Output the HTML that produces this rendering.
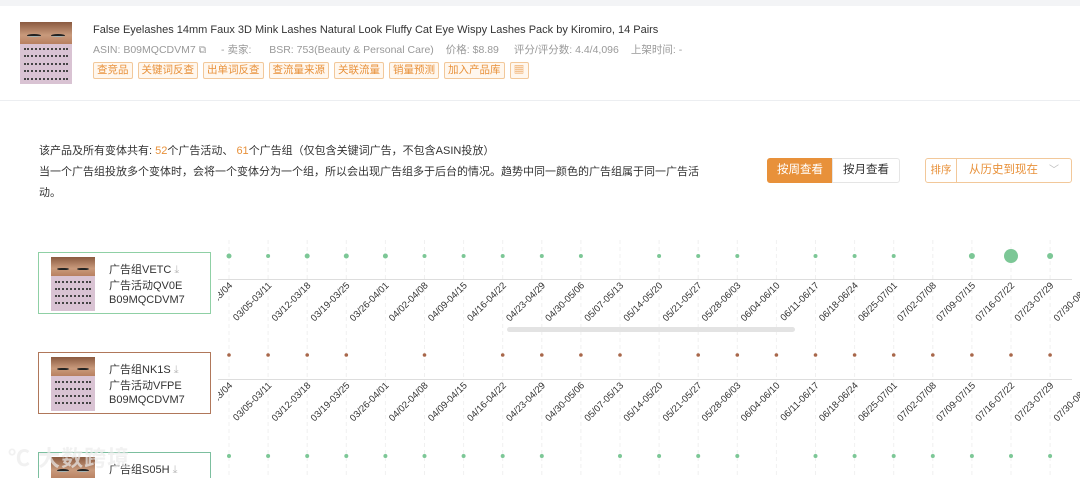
<!DOCTYPE html>
<html><head><meta charset="utf-8"><style>
*{margin:0;padding:0;box-sizing:border-box}
html,body{width:1080px;height:478px;overflow:hidden}
body{background:#fff;font-family:"Liberation Sans","Noto Sans CJK SC",sans-serif;position:relative;color:#333}
.abs{position:absolute}
.top{left:0;top:0;width:1080px;height:6px;background:#f3f4f6}
.sep{left:0;top:100px;width:1080px;height:1px;background:#eceef1}
.pimg{overflow:hidden;background:#d9c3d3}
.pimg .face{position:absolute;left:0;top:0;width:100%;height:36%;background:linear-gradient(#8a5a40,#c99a7c 60%,#b88060)}
.pimg .eye{position:absolute;top:55%;width:26%;height:14%;background:#9fb3b6;border-radius:50%;border-top:2px solid #222}
.pimg .lash{position:absolute;left:8%;width:84%;height:3px;border-top:2px dotted #444}
.title{left:93px;top:24px;font-size:11px;color:#333}
.meta{left:93px;top:42px;font-size:10.5px;color:#999;white-space:nowrap}
.meta span{margin-right:12px}
.tags{left:93px;top:62px;display:flex;gap:5px}
.tag{border:1px solid #f2c89a;background:#fff7ee;color:#e8913a;font-size:10.5px;height:17px;line-height:15px;padding:0 3px;border-radius:2px}
.txt{left:39px;font-size:11px;color:#333}
.or{color:#e8913a}
.btn{top:158px;height:25px;line-height:23px;font-size:11.5px;text-align:center;border:1px solid #e5e5e5}
.card{left:38px;width:173px;height:62px;border:1px solid #8fd0a5;background:#fff;overflow:hidden}
.card .pimg{position:absolute;left:12px;top:4px;width:44px;height:54px}
.card .l{position:absolute;left:70px;font-size:11px;color:#333;white-space:nowrap}
</style></head><body>
<div class="abs top"></div>
<div class="abs pimg" style="left:20px;top:22px;width:52px;height:62px">
 <div class="face"><div class="eye" style="left:14%"></div><div class="eye" style="left:60%"></div></div>
 <div class="lash" style="top:42%"></div><div class="lash" style="top:54%"></div><div class="lash" style="top:66%"></div><div class="lash" style="top:78%"></div><div class="lash" style="top:90%"></div>
</div>
<div class="abs title">False Eyelashes 14mm Faux 3D Mink Lashes Natural Look Fluffy Cat Eye Wispy Lashes Pack by Kiromiro, 14 Pairs</div>
<div class="abs meta"><span>ASIN: B09MQCDVM7 ⧉</span><span>&nbsp;- 卖家:</span><span>&nbsp;&nbsp;BSR: 753(Beauty &amp; Personal Care)</span><span>价格: $8.89</span><span>&nbsp;评分/评分数: 4.4/4,096</span><span>上架时间: -</span></div>
<div class="abs tags"><span class="tag">查竞品</span><span class="tag">关键词反查</span><span class="tag">出单词反查</span><span class="tag">查流量来源</span><span class="tag">关联流量</span><span class="tag">销量预测</span><span class="tag">加入产品库</span><span class="tag" style="width:19px;text-align:center">▦</span></div>
<div class="abs sep"></div>
<div class="abs txt" style="top:142px">该产品及所有变体共有: <span class="or">52</span>个广告活动、 <span class="or">61</span>个广告组（仅包含关键词广告，不包含ASIN投放）</div>
<div class="abs txt" style="top:163px">当一个广告组投放多个变体时，会将一个变体分为一个组，所以会出现广告组多于后台的情况。趋势中同一颜色的广告组属于同一广告活</div>
<div class="abs txt" style="top:184px">动。</div>
<div class="abs btn" style="left:767px;width:66px;background:#e8913a;border-color:#e8913a;color:#fff;border-radius:3px 0 0 3px">按周查看</div>
<div class="abs btn" style="left:832px;width:68px;color:#333;border-radius:0 3px 3px 0">按月查看</div>
<div class="abs btn" style="left:925px;width:147px;border-color:#f2c89a;border-radius:3px;text-align:left;color:#e8913a">
 <span style="display:inline-block;width:31px;text-align:center;border-right:1px solid #f2c89a;font-size:10.5px">排序</span><span style="margin-left:12px">从历史到现在</span><span style="position:absolute;right:12px;color:#bbb;font-size:10px">﹀</span></div>

<svg class="abs" style="left:0;top:0" width="1080" height="478" font-family="Liberation Sans, sans-serif" font-size="9.5" fill="#333">
<defs><clipPath id="c"><rect x="218" y="230" width="862" height="248"/></clipPath></defs>
<g clip-path="url(#c)">
<g stroke="#f0f0f0" stroke-dasharray="4 3">
<line x1="229" y1="240" x2="229" y2="478"/><line x1="268.1" y1="240" x2="268.1" y2="478"/><line x1="307.2" y1="240" x2="307.2" y2="478"/><line x1="346.3" y1="240" x2="346.3" y2="478"/><line x1="385.4" y1="240" x2="385.4" y2="478"/><line x1="424.5" y1="240" x2="424.5" y2="478"/><line x1="463.6" y1="240" x2="463.6" y2="478"/><line x1="502.7" y1="240" x2="502.7" y2="478"/><line x1="541.8" y1="240" x2="541.8" y2="478"/><line x1="580.9" y1="240" x2="580.9" y2="478"/><line x1="620" y1="240" x2="620" y2="478"/><line x1="659.1" y1="240" x2="659.1" y2="478"/><line x1="698.2" y1="240" x2="698.2" y2="478"/><line x1="737.3" y1="240" x2="737.3" y2="478"/><line x1="776.4" y1="240" x2="776.4" y2="478"/><line x1="815.5" y1="240" x2="815.5" y2="478"/><line x1="854.6" y1="240" x2="854.6" y2="478"/><line x1="893.7" y1="240" x2="893.7" y2="478"/><line x1="932.8" y1="240" x2="932.8" y2="478"/><line x1="971.9" y1="240" x2="971.9" y2="478"/><line x1="1011" y1="240" x2="1011" y2="478"/><line x1="1050.1" y1="240" x2="1050.1" y2="478"/>
</g>
<line x1="218" y1="279.5" x2="1072" y2="279.5" stroke="#ddd"/>
<line x1="218" y1="379.5" x2="1072" y2="379.5" stroke="#ddd"/>
<rect x="507" y="327" width="288" height="5" rx="2.5" fill="#e3e3e3"/>
<g fill="#7cc796">
<circle cx="229" cy="256" r="2.5"/><circle cx="268.1" cy="256" r="2"/><circle cx="307.2" cy="256" r="2.5"/><circle cx="346.3" cy="256" r="2.5"/><circle cx="385.4" cy="256" r="2.5"/><circle cx="424.5" cy="256" r="2"/><circle cx="463.6" cy="256" r="2"/><circle cx="502.7" cy="256" r="2"/><circle cx="541.8" cy="256" r="2"/><circle cx="580.9" cy="256" r="2"/><circle cx="659.1" cy="256" r="2"/><circle cx="698.2" cy="256" r="2"/><circle cx="737.3" cy="256" r="2"/><circle cx="815.5" cy="256" r="2"/><circle cx="854.6" cy="256" r="2"/><circle cx="893.7" cy="256" r="2"/><circle cx="971.9" cy="256" r="3"/><circle cx="1011" cy="256" r="7"/><circle cx="1050.1" cy="256" r="3"/>
<circle cx="229" cy="456" r="2"/><circle cx="268.1" cy="456" r="2"/><circle cx="307.2" cy="456" r="2"/><circle cx="346.3" cy="456" r="2"/><circle cx="385.4" cy="456" r="2"/><circle cx="424.5" cy="456" r="2"/><circle cx="463.6" cy="456" r="2"/><circle cx="502.7" cy="456" r="2"/><circle cx="541.8" cy="456" r="2"/><circle cx="620" cy="456" r="2"/><circle cx="659.1" cy="456" r="2"/><circle cx="698.2" cy="456" r="2"/><circle cx="737.3" cy="456" r="2"/><circle cx="815.5" cy="456" r="2"/><circle cx="854.6" cy="456" r="2"/><circle cx="893.7" cy="456" r="2"/><circle cx="932.8" cy="456" r="2"/><circle cx="971.9" cy="456" r="2"/><circle cx="1011" cy="456" r="2"/><circle cx="1050.1" cy="456" r="2"/>
</g>
<g fill="#a8674a">
<circle cx="229" cy="355" r="1.8"/><circle cx="268.1" cy="355" r="1.8"/><circle cx="307.2" cy="355" r="1.8"/><circle cx="346.3" cy="355" r="1.8"/><circle cx="424.5" cy="355" r="1.8"/><circle cx="502.7" cy="355" r="1.8"/><circle cx="541.8" cy="355" r="1.8"/><circle cx="580.9" cy="355" r="1.8"/><circle cx="620" cy="355" r="1.8"/><circle cx="698.2" cy="355" r="1.8"/><circle cx="737.3" cy="355" r="1.8"/><circle cx="776.4" cy="355" r="1.8"/><circle cx="815.5" cy="355" r="1.8"/><circle cx="854.6" cy="355" r="1.8"/><circle cx="893.7" cy="355" r="1.8"/><circle cx="932.8" cy="355" r="1.8"/><circle cx="971.9" cy="355" r="1.8"/><circle cx="1011" cy="355" r="1.8"/><circle cx="1050.1" cy="355" r="1.8"/>
</g>
<g text-anchor="end">
<text transform="translate(233,286) rotate(-45)">02/26-03/04</text><text transform="translate(272.1,286) rotate(-45)">03/05-03/11</text><text transform="translate(311.2,286) rotate(-45)">03/12-03/18</text><text transform="translate(350.3,286) rotate(-45)">03/19-03/25</text><text transform="translate(389.4,286) rotate(-45)">03/26-04/01</text><text transform="translate(428.5,286) rotate(-45)">04/02-04/08</text><text transform="translate(467.6,286) rotate(-45)">04/09-04/15</text><text transform="translate(506.7,286) rotate(-45)">04/16-04/22</text><text transform="translate(545.8,286) rotate(-45)">04/23-04/29</text><text transform="translate(584.9,286) rotate(-45)">04/30-05/06</text><text transform="translate(624,286) rotate(-45)">05/07-05/13</text><text transform="translate(663.1,286) rotate(-45)">05/14-05/20</text><text transform="translate(702.2,286) rotate(-45)">05/21-05/27</text><text transform="translate(741.3,286) rotate(-45)">05/28-06/03</text><text transform="translate(780.4,286) rotate(-45)">06/04-06/10</text><text transform="translate(819.5,286) rotate(-45)">06/11-06/17</text><text transform="translate(858.6,286) rotate(-45)">06/18-06/24</text><text transform="translate(897.7,286) rotate(-45)">06/25-07/01</text><text transform="translate(936.8,286) rotate(-45)">07/02-07/08</text><text transform="translate(975.9,286) rotate(-45)">07/09-07/15</text><text transform="translate(1015,286) rotate(-45)">07/16-07/22</text><text transform="translate(1054.1,286) rotate(-45)">07/23-07/29</text><text transform="translate(1093.2,286) rotate(-45)">07/30-08/05</text>
<text transform="translate(233,386) rotate(-45)">02/26-03/04</text><text transform="translate(272.1,386) rotate(-45)">03/05-03/11</text><text transform="translate(311.2,386) rotate(-45)">03/12-03/18</text><text transform="translate(350.3,386) rotate(-45)">03/19-03/25</text><text transform="translate(389.4,386) rotate(-45)">03/26-04/01</text><text transform="translate(428.5,386) rotate(-45)">04/02-04/08</text><text transform="translate(467.6,386) rotate(-45)">04/09-04/15</text><text transform="translate(506.7,386) rotate(-45)">04/16-04/22</text><text transform="translate(545.8,386) rotate(-45)">04/23-04/29</text><text transform="translate(584.9,386) rotate(-45)">04/30-05/06</text><text transform="translate(624,386) rotate(-45)">05/07-05/13</text><text transform="translate(663.1,386) rotate(-45)">05/14-05/20</text><text transform="translate(702.2,386) rotate(-45)">05/21-05/27</text><text transform="translate(741.3,386) rotate(-45)">05/28-06/03</text><text transform="translate(780.4,386) rotate(-45)">06/04-06/10</text><text transform="translate(819.5,386) rotate(-45)">06/11-06/17</text><text transform="translate(858.6,386) rotate(-45)">06/18-06/24</text><text transform="translate(897.7,386) rotate(-45)">06/25-07/01</text><text transform="translate(936.8,386) rotate(-45)">07/02-07/08</text><text transform="translate(975.9,386) rotate(-45)">07/09-07/15</text><text transform="translate(1015,386) rotate(-45)">07/16-07/22</text><text transform="translate(1054.1,386) rotate(-45)">07/23-07/29</text><text transform="translate(1093.2,386) rotate(-45)">07/30-08/05</text>
</g>
</g>
</svg>

<div class="abs card" style="top:252px">
 <div class="pimg"><div class="face"><div class="eye" style="left:14%"></div><div class="eye" style="left:60%"></div></div><div class="lash" style="top:45%"></div><div class="lash" style="top:58%"></div><div class="lash" style="top:71%"></div><div class="lash" style="top:84%"></div></div>
 <div class="l" style="top:8px">广告组VETC <span style="color:#bbb">⤓</span></div><div class="l" style="top:24px">广告活动QV0E</div><div class="l" style="top:41px">B09MQCDVM7</div>
</div>
<div class="abs card" style="top:352px;border-color:#b0775a">
 <div class="pimg"><div class="face"><div class="eye" style="left:14%"></div><div class="eye" style="left:60%"></div></div><div class="lash" style="top:45%"></div><div class="lash" style="top:58%"></div><div class="lash" style="top:71%"></div><div class="lash" style="top:84%"></div></div>
 <div class="l" style="top:8px">广告组NK1S <span style="color:#bbb">⤓</span></div><div class="l" style="top:24px">广告活动VFPE</div><div class="l" style="top:41px">B09MQCDVM7</div>
</div>
<div class="abs card" style="top:452px;height:26px;border-color:#7cbf9f;border-bottom:none">
 <div class="pimg" style="height:22px"><div class="face" style="height:100%"><div class="eye" style="left:14%"></div><div class="eye" style="left:60%"></div></div></div>
 <div class="l" style="top:8px">广告组S05H <span style="color:#bbb">⤓</span></div>
</div>
<div class="abs" style="left:8px;top:444px;height:30px;overflow:hidden;font-size:22px;line-height:30px;color:rgba(235,235,235,0.7);font-weight:bold;letter-spacing:1px">℃ 大数跨境</div>
</body></html>
